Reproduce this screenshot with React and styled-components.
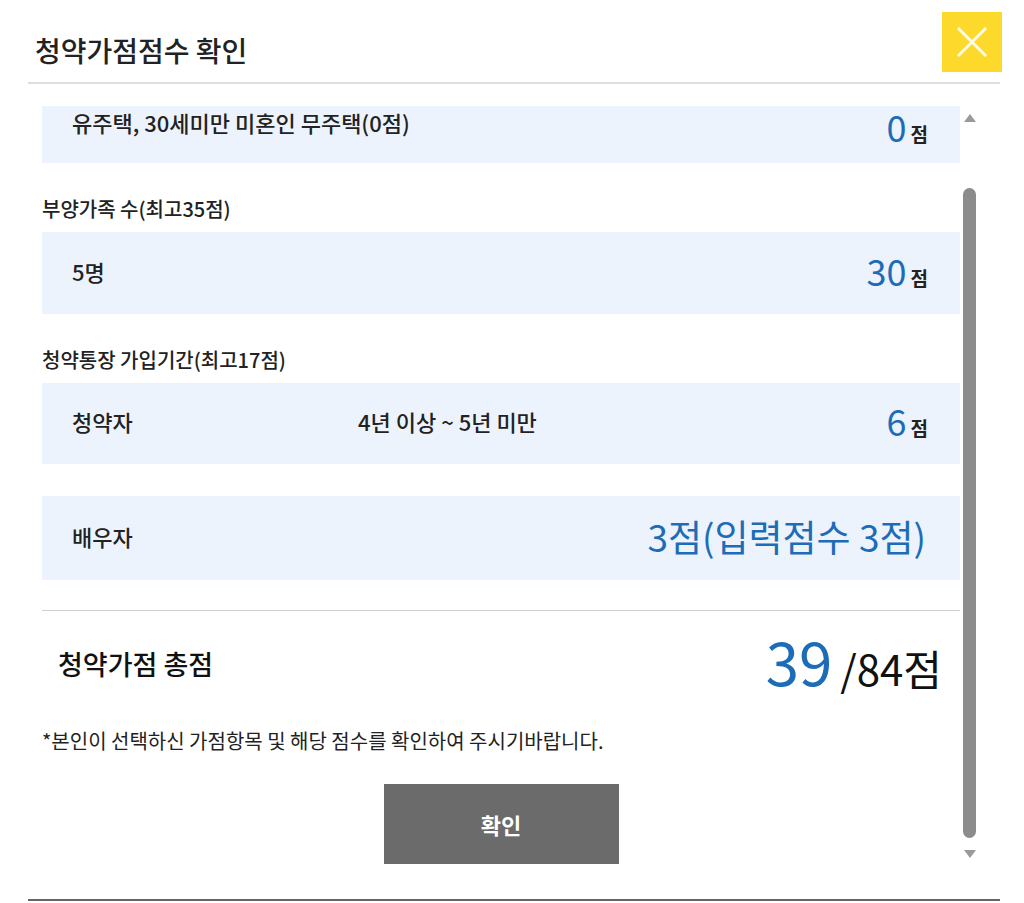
import React from "react";
import styled, { createGlobalStyle } from "styled-components";

const GlobalStyle = createGlobalStyle`
  body {
    margin: 0;
    background: #fff;
    font-family: "Noto Sans CJK KR", "Noto Sans", sans-serif;
    color: #222;
  }
`;

const Modal = styled.div`
  width: 1024px;
  height: 903px;
  box-sizing: border-box;
  padding: 12px 24px 2px 28px;
  display: flex;
  flex-direction: column;
`;

const Header = styled.div`
  display: flex;
  justify-content: space-between;
  align-items: flex-start;
  height: 70px;
  border-bottom: 2px solid #dedede;
`;

const Title = styled.h1`
  margin: 20px 0 0;
  padding-left: 7px;
  font-size: 28px;
  line-height: 36px;
  font-weight: 500;
  color: #222;
`;

const CloseButton = styled.button`
  width: 60px;
  height: 60px;
  margin-right: -2px;
  border: none;
  padding: 0;
  background: #fcd92b;
  display: flex;
  align-items: center;
  justify-content: center;
  cursor: pointer;
`;

const Body = styled.div`
  flex: 1;
  display: flex;
  border-bottom: 2px solid #666;
  min-height: 0;
`;

const Content = styled.div`
  flex: 1;
  padding: 22px 0 0 14px;
  display: flex;
  flex-direction: column;
`;

const Row = styled.div`
  display: flex;
  align-items: ${(p) => (p.$top ? "flex-start" : "center")};
  height: ${(p) => p.$height}px;
  box-sizing: border-box;
  padding: ${(p) => (p.$top ? "1px 32px 0 30px" : "0 32px 5px 30px")};
  background: #edf3fd;
  margin-top: ${(p) => p.$gap || 0}px;
`;

const Name = styled.div`
  font-size: 22px;
  line-height: 30px;
  font-weight: 500;
  color: #222;
  width: ${(p) => (p.$wide ? "auto" : "286px")};
  flex-shrink: 0;
`;

const Period = styled.div`
  font-size: 22px;
  line-height: 30px;
  font-weight: 500;
  color: #222;
`;

const Score = styled.div`
  margin-left: auto;
  display: flex;
  align-items: baseline;
  gap: 4px;
`;

const Num = styled.span`
  font-size: 36px;
  line-height: 38px;
  color: #1d6cb8;
  font-weight: 400;
`;

const Unit = styled.span`
  font-size: 19px;
  font-weight: 700;
  color: #222;
`;

const BigValue = styled.span`
  margin-left: auto;
  margin-right: 2px;
  font-size: 37px;
  line-height: 44px;
  color: #1d6cb8;
  font-weight: 400;
`;

const Label = styled.div`
  font-size: 20px;
  line-height: 24px;
  font-weight: 500;
  color: #222;
  margin: ${(p) => p.$mt}px 0 11px;
`;

const Divider = styled.hr`
  margin: 30px 0 0;
  border: none;
  border-top: 1px solid #cfcfcf;
`;

const Total = styled.div`
  display: flex;
  align-items: center;
  justify-content: space-between;
  height: 110px;
  padding: 0 18px 6px 16px;
  box-sizing: border-box;
`;

const TotalLabel = styled.div`
  font-size: 27px;
  font-weight: 500;
  color: #111;
`;

const TotalValue = styled.div`
  display: flex;
  align-items: baseline;
  gap: 8px;
`;

const TotalNum = styled.span`
  font-size: 60px;
  line-height: 64px;
  color: #1d6cb8;
`;

const TotalMax = styled.span`
  font-size: 42px;
  color: #111;
`;

const Note = styled.p`
  margin: 6px 0 0;
  font-size: 20px;
  line-height: 28px;
  color: #222;
`;

const ConfirmButton = styled.button`
  align-self: center;
  margin-top: 29px;
  width: 235px;
  height: 80px;
  border: none;
  background: #6b6b6b;
  color: #fff;
  font-family: inherit;
  font-size: 22px;
  font-weight: 700;
  cursor: pointer;
`;

const ScrollCol = styled.div`
  width: 40px;
  padding: 30px 0 0 3px;
  box-sizing: border-box;
  display: flex;
  flex-direction: column;
  align-items: flex-start;
`;

const Arrow = styled.div`
  width: 0;
  height: 0;
  margin-left: 1px;
  border-left: 6px solid transparent;
  border-right: 6px solid transparent;
  ${(p) =>
    p.$down
      ? "border-top: 8px solid #9a9a9a; margin-top: 12px;"
      : "border-bottom: 8px solid #9a9a9a;"}
`;

const Thumb = styled.div`
  width: 13px;
  height: 650px;
  margin-top: 66px;
  border-radius: 7px;
  background: #8c8c8c;
`;

const App = () => (
  <>
    <GlobalStyle />
    <Modal>
      <Header>
        <Title>청약가점점수 확인</Title>
        <CloseButton aria-label="닫기">
          <svg width="32" height="32" viewBox="0 0 32 32">
            <path d="M2 2 L30 30 M30 2 L2 30" stroke="#fffbe6" strokeWidth="3" />
          </svg>
        </CloseButton>
      </Header>
      <Body>
        <Content>
          <Row $height={57} $top>
            <Name $wide>유주택, 30세미만 미혼인 무주택(0점)</Name>
            <Score>
              <Num>0</Num>
              <Unit>점</Unit>
            </Score>
          </Row>

          <Label $mt={34}>부양가족 수(최고35점)</Label>
          <Row $height={82}>
            <Name>5명</Name>
            <Score>
              <Num>30</Num>
              <Unit>점</Unit>
            </Score>
          </Row>

          <Label $mt={34}>청약통장 가입기간(최고17점)</Label>
          <Row $height={81}>
            <Name>청약자</Name>
            <Period>4년 이상 ~ 5년 미만</Period>
            <Score>
              <Num>6</Num>
              <Unit>점</Unit>
            </Score>
          </Row>
          <Row $height={84} $gap={32}>
            <Name>배우자</Name>
            <BigValue>3점(입력점수 3점)</BigValue>
          </Row>

          <Divider />
          <Total>
            <TotalLabel>청약가점 총점</TotalLabel>
            <TotalValue>
              <TotalNum>39</TotalNum>
              <TotalMax>/84점</TotalMax>
            </TotalValue>
          </Total>
          <Note>*본인이 선택하신 가점항목 및 해당 점수를 확인하여 주시기바랍니다.</Note>
          <ConfirmButton>확인</ConfirmButton>
        </Content>
        <ScrollCol>
          <Arrow />
          <Thumb />
          <Arrow $down />
        </ScrollCol>
      </Body>
    </Modal>
  </>
);

export default App;
